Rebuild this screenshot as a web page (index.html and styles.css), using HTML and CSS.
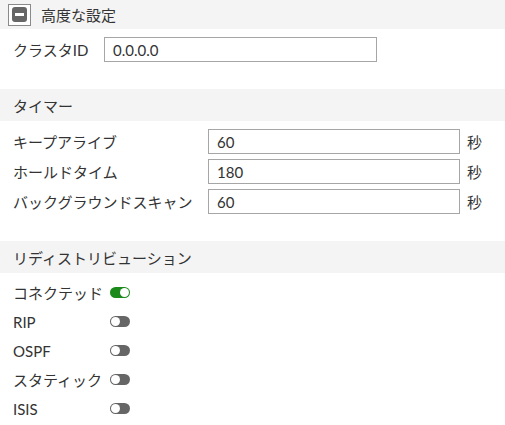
FILE: index.html
```html
<!DOCTYPE html>
<html lang="ja">
<head>
<meta charset="utf-8">
<link rel="stylesheet" href="styles.css">
</head>
<body>
<div class="section-head top">
  <span class="collapse-icon"><span class="bar"></span></span>
  <span class="head-title">高度な設定</span>
</div>
<div class="row cluster">
  <label class="label">クラスタID</label>
  <input class="field cluster-field" type="text" value="0.0.0.0">
</div>

<div class="section-head">タイマー</div>
<div class="timer-grid">
  <label class="label">キープアライブ</label>
  <input class="field" type="text" value="60">
  <span class="unit">秒</span>
  <label class="label">ホールドタイム</label>
  <input class="field" type="text" value="180">
  <span class="unit">秒</span>
  <label class="label">バックグラウンドスキャン</label>
  <input class="field" type="text" value="60">
  <span class="unit">秒</span>
</div>

<div class="section-head">リディストリビューション</div>
<div class="toggle-grid">
  <span class="label">コネクテッド</span><span class="toggle on"></span>
  <span class="label">RIP</span><span class="toggle"></span>
  <span class="label">OSPF</span><span class="toggle"></span>
  <span class="label">スタティック</span><span class="toggle"></span>
  <span class="label">ISIS</span><span class="toggle"></span>
</div>
</body>
</html>
```

FILE: styles.css
```css
* { box-sizing: border-box; }
html, body { margin: 0; padding: 0; background: #fff; }
body {
  font-family: Lato, "Noto Sans CJK JP", sans-serif;
  font-size: 15px;
  color: #333;
  width: 505px;
}
.section-head {
  background: #f4f4f4;
  height: 32px;
  display: flex;
  align-items: center;
  padding-left: 13px;
  margin-top: 27px;
}
.section-head.top {
  margin-top: 0;
  height: 29px;
  padding-left: 8px;
}
.collapse-icon {
  width: 23px;
  height: 22px;
  border: 1px solid #8a8a8a;
  display: flex;
  align-items: center;
  justify-content: center;
  background: #fff;
  margin-right: 10px;
}
.collapse-icon .bar {
  width: 15px;
  height: 15px;
  background: #666;
  border-radius: 3px;
  position: relative;
  display: block;
}
.collapse-icon .bar::after {
  content: "";
  position: absolute;
  left: 3px;
  right: 3px;
  top: 6px;
  height: 3px;
  background: #fff;
}
.row.cluster {
  display: flex;
  align-items: center;
  padding-left: 13px;
  margin-top: 8px;
}
.cluster .label { width: 91px; }
.field {
  height: 25px;
  border: 1px solid #a6a6a6;
  border-radius: 0;
  padding: 0 8px 0 8px;
  font-family: Lato, "Noto Sans CJK JP", sans-serif;
  font-size: 15px;
  color: #333;
  background: #fff;
  outline: none;
}
.cluster-field { width: 273px; }
.timer-grid {
  display: grid;
  grid-template-columns: 188px 252px auto;
  column-gap: 7px;
  row-gap: 5px;
  align-items: center;
  padding-left: 13px;
  margin-top: 8px;
}
.timer-grid .field { width: 252px; }
.toggle-grid {
  display: grid;
  grid-template-columns: 97px auto;
  grid-auto-rows: 29px;
  align-items: center;
  padding-left: 13px;
  margin-top: 5px;
}
.toggle {
  width: 20px;
  height: 11px;
  border-radius: 6px;
  background: #666;
  position: relative;
  display: block;
}
.toggle::after {
  content: "";
  position: absolute;
  top: 1px;
  left: 1px;
  width: 9px;
  height: 9px;
  border-radius: 50%;
  background: #fff;
}
.toggle.on { background: #1b8a1b; }
.toggle.on::after { left: 10px; }
```
